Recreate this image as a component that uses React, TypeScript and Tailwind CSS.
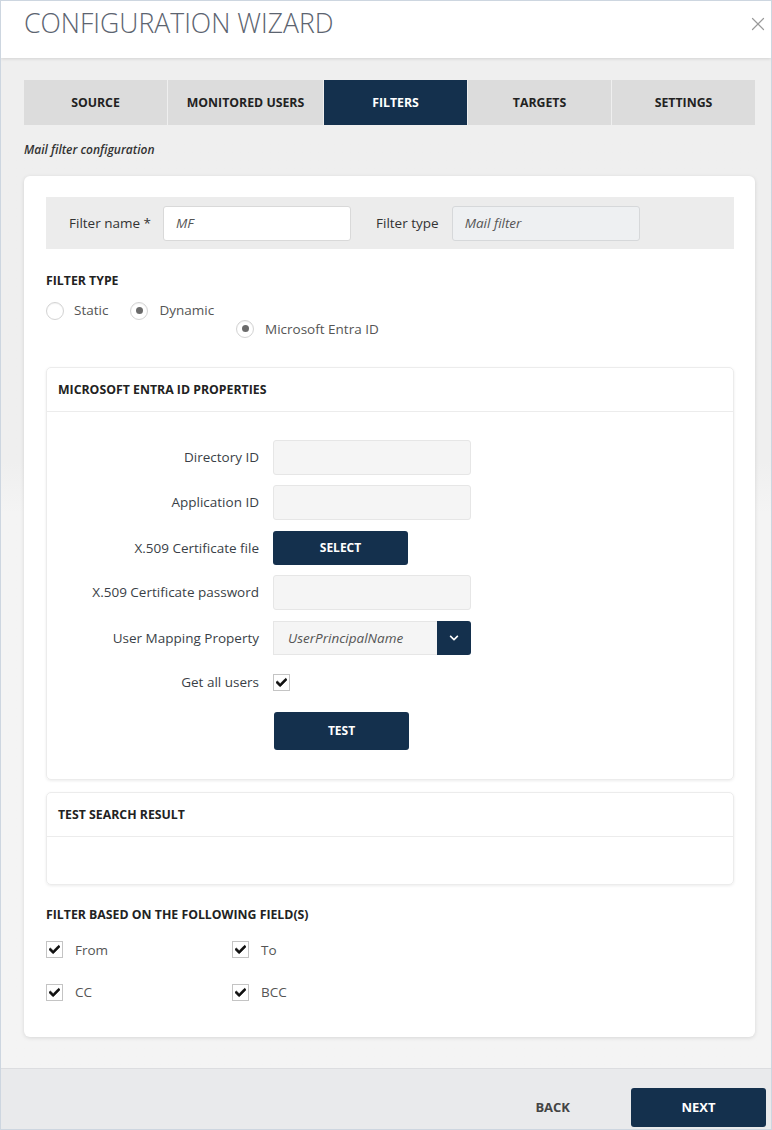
import { FaCheck, FaChevronDown } from "react-icons/fa";
import { X } from "lucide-react";

const tabs = [
  { label: "Source", w: "w-[143px]" },
  { label: "Monitored users", w: "w-[155px]" },
  { label: "Filters", w: "w-[143px]", active: true },
  { label: "Targets", w: "w-[143px]" },
  { label: "Settings", w: "w-[143px]" },
];

function Radio({ checked }: { checked?: boolean }) {
  return (
    <span className="w-[18px] h-[18px] rounded-full border border-[#d3d3d3] bg-white flex items-center justify-center shadow-[inset_0_1px_1px_rgba(0,0,0,0.05)]">
      {checked && <span className="w-[7px] h-[7px] rounded-full bg-[#6b6b6b]" />}
    </span>
  );
}

function Check() {
  return (
    <span className="w-[17px] h-[17px] border border-[#c4c4c4] bg-white flex items-center justify-center">
      <FaCheck size={11} className="text-[#111] stroke-[30px] stroke-[#111]" />
    </span>
  );
}

function FieldRow({ label, className = "", children }: { label: string; className?: string; children: React.ReactNode }) {
  return (
    <div className={`flex items-center ${className}`}>
      <div className="w-[226px] text-right pr-[14px] text-[13.5px] text-[#3a3f47]">{label}</div>
      {children}
    </div>
  );
}

function TextBox() {
  return <div className="w-[198px] h-[35px] bg-[#f5f5f5] border border-[#e6e6e6] rounded-[3px]" />;
}

function DarkButton({ label, h }: { label: string; h: string }) {
  return (
    <button className={`w-[135px] ${h} bg-[#14304d] text-white text-[12px] font-bold rounded-[3px] uppercase`}>
      {label}
    </button>
  );
}

export default function App() {
  return (
    <div className="h-[1130px] flex flex-col border border-[#cdd6e0] bg-[#f0f0f0] text-[#333] font-['Open_Sans',sans-serif] overflow-hidden">
      <header className="h-[57px] shrink-0 bg-white flex items-start justify-between pl-[23px] pr-[2px] pt-[4px] shadow-[0_1px_3px_rgba(0,0,0,0.12)] relative z-10">
        <h1 className="text-[26.6px] font-light text-[#5c6470] uppercase leading-[36px]">Configuration Wizard</h1>
        <X size={22} strokeWidth={1.3} className="text-[#9a9a9a] mt-[8px]" />
      </header>

      <main className="flex-1 pl-[23px] pr-[16px] pt-[22px] bg-gradient-to-b from-[#efefef] from-40% to-[#f4f4f4] to-45%">
        <nav className="flex gap-px">
          {tabs.map((t) => (
            <div
              key={t.label}
              className={`${t.w} h-[45px] flex items-center justify-center pt-[1px] text-[12.3px] font-bold uppercase ${
                t.active ? "bg-[#14304d] text-white" : "bg-[#dcdcdc] text-[#222]"
              }`}
            >
              {t.label}
            </div>
          ))}
        </nav>

        <p className="mt-[16px] text-[12px] italic font-semibold text-[#333]">Mail filter configuration</p>

        <section className="mt-[17px] bg-white rounded-[6px] shadow-[0_1px_4px_rgba(0,0,0,0.12)] pl-[22px] pr-[21px] pt-[21px] pb-[35px]">
          <div className="h-[52px] bg-[#ececec] flex items-center pl-[23px]">
            <span className="text-[13.5px] text-[#333]">Filter name *</span>
            <div className="ml-[12px] w-[188px] h-[35px] bg-white border border-[#d9d9d9] rounded-[3px] flex items-center pl-[12px] text-[13.5px] italic text-[#555]">
              MF
            </div>
            <span className="ml-[25px] text-[13.5px] text-[#333]">Filter type</span>
            <div className="ml-[13px] w-[188px] h-[35px] bg-[#eef0f2] border border-[#d6d8da] rounded-[3px] flex items-center pl-[12px] text-[13.5px] italic text-[#555]">
              Mail filter
            </div>
          </div>

          <h2 className="mt-[23px] text-[12.3px] font-bold uppercase text-[#222]">Filter type</h2>
          <div className="mt-[10px] flex items-center text-[13.5px] text-[#555]">
            <Radio />
            <span className="ml-[10px]">Static</span>
            <span className="ml-[22px]"><Radio checked /></span>
            <span className="ml-[11px]">Dynamic</span>
          </div>
          <div className="-mt-[2px] ml-[190px] flex items-center text-[13.5px] text-[#555]">
            <Radio checked />
            <span className="ml-[11px]">Microsoft Entra ID</span>
          </div>

          <div className="mt-[28px] border border-[#ececec] rounded-[5px] shadow-[0_1px_3px_rgba(0,0,0,0.08)]">
            <div className="h-[44px] border-b border-[#ececec] flex items-center pl-[11px] pt-[1px] text-[12.3px] font-bold uppercase text-[#222]">
              Microsoft Entra ID properties
            </div>
            <div className="pt-[28px] pb-[29px] flex flex-col">
              <FieldRow label="Directory ID"><TextBox /></FieldRow>
              <FieldRow label="Application ID" className="mt-[10px]"><TextBox /></FieldRow>
              <FieldRow label="X.509 Certificate file" className="mt-[11px]">
                <DarkButton label="Select" h="h-[34px]" />
              </FieldRow>
              <FieldRow label="X.509 Certificate password" className="mt-[10px]"><TextBox /></FieldRow>
              <FieldRow label="User Mapping Property" className="mt-[11px]">
                <div className="w-[198px] h-[34px] flex">
                  <div className="flex-1 bg-[#f5f5f5] border border-[#e6e6e6] border-r-0 flex items-center pl-[14px] text-[13.5px] italic text-[#555]">
                    UserPrincipalName
                  </div>
                  <div className="w-[34px] bg-[#14304d] rounded-r-[3px] flex items-center justify-center">
                    <FaChevronDown size={10} className="text-white" />
                  </div>
                </div>
              </FieldRow>
              <FieldRow label="Get all users" className="mt-[17px]"><Check /></FieldRow>
              <div className="mt-[20px] pl-[227px] flex"><DarkButton label="Test" h="h-[38px]" /></div>
            </div>
          </div>

          <div className="mt-[12px] border border-[#ececec] rounded-[5px] shadow-[0_1px_3px_rgba(0,0,0,0.08)]">
            <div className="h-[44px] border-b border-[#ececec] flex items-center pl-[11px] pt-[1px] text-[12.3px] font-bold uppercase text-[#222]">
              Test search result
            </div>
            <div className="h-[47px]" />
          </div>

          <h2 className="mt-[21px] text-[12.3px] font-bold uppercase text-[#222]">Filter based on the following field(s)</h2>
          <div className="mt-[15px] grid grid-cols-[186px_186px] gap-y-[22px] text-[13.5px] text-[#555]">
            {["From", "To", "CC", "BCC"].map((f) => (
              <label key={f} className="flex items-center gap-[12px]">
                <Check />
                <span>{f}</span>
              </label>
            ))}
          </div>
        </section>
      </main>

      <footer className="h-[61px] shrink-0 bg-[#e9eaec] border-t border-[#dcdde0] flex items-end justify-end pr-[5px] pb-[2px]">
        <button className="h-[39px] mr-[61px] text-[13px] font-bold uppercase text-[#444] flex items-center">Back</button>
        <button className="w-[135px] h-[39px] bg-[#14304d] text-white text-[13px] font-bold rounded-[3px] uppercase">
          Next
        </button>
      </footer>
    </div>
  );
}
